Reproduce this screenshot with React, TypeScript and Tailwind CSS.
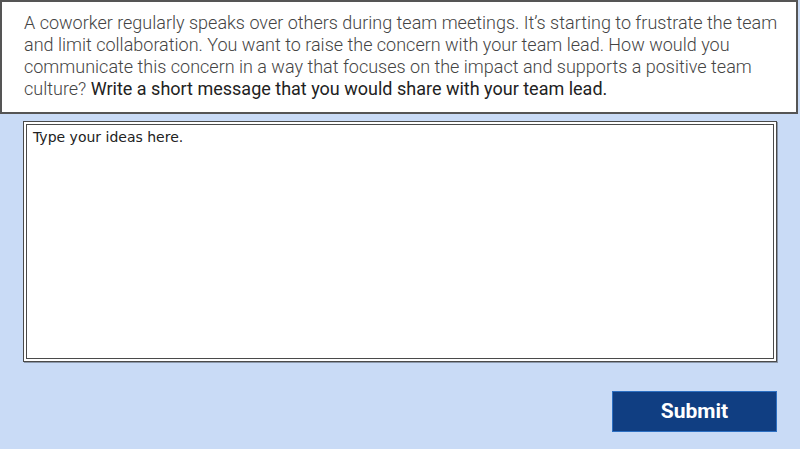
export default function App() {
  return (
    <div className="w-[800px] h-[449px] bg-[#c9dbf6] flex flex-col overflow-hidden">
      {/* Prompt */}
      <div className="w-[798px] h-[114px] bg-white border-2 border-[#555] px-[22px] pt-[10px] font-['Roboto',sans-serif] text-[18px] leading-[22px] text-[#444] font-light whitespace-nowrap">
        A coworker regularly speaks over others during team meetings. It’s starting to frustrate the team
        <br />
        and limit collaboration. You want to raise the concern with your team lead. How would you
        <br />
        communicate this concern in a way that focuses on the impact and supports a positive team
        <br />
        culture? <span className="font-normal text-[#222]">Write a short message that you would share with your team lead.</span>
      </div>

      {/* Answer box */}
      <div className="ml-[23px] mt-[7px] w-[754px] h-[241px] bg-white border-[4px] border-double border-[#4a4a4a] shadow-[1px_1px_0_#8a97aa]">
        <textarea
          className="w-full h-full resize-none outline-none px-[6px] pt-[2px] font-['DejaVu_Sans',sans-serif] text-[14px] leading-[20px] text-[#222] placeholder:text-[#222]"
          placeholder="Type your ideas here."
        />
      </div>

      {/* Submit */}
      <div className="flex justify-end pr-[23px] mt-[29px]">
        <button className="w-[165px] h-[41px] bg-[#103e82] border border-[#2c6fc2] text-white font-['Roboto',sans-serif] font-bold text-[21px] leading-none">
          Submit
        </button>
      </div>
    </div>
  );
}
